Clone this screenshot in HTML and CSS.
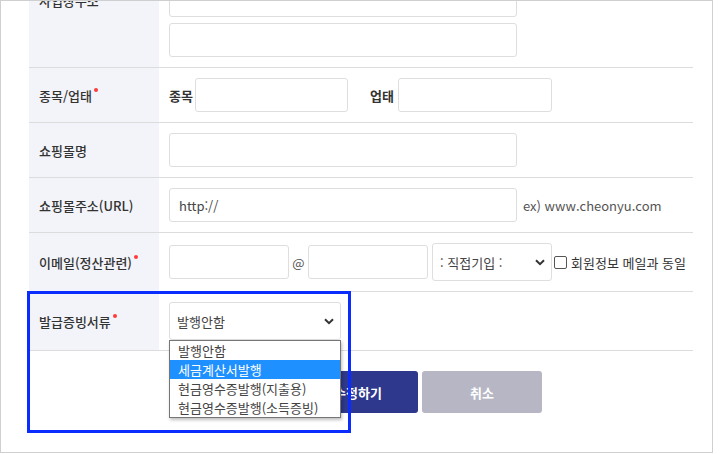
FILE: index.html
```html
<!DOCTYPE html>
<html lang="ko">
<head>
    <meta charset="UTF-8">
    <meta name="viewport" content="width=device-width, initial-scale=1.0">
    <title>입점신청 - 정보수정</title>
    <link rel="stylesheet" href="styles.css">
</head>
<body>
    <div class="frame">
        <div class="form-wrap">
            <div class="form-table">
                <div class="row row-addr">
                    <div class="label">사업장주소</div>
                    <div class="field field-stack">
                        <div class="input w-120"></div>
                        <div class="input w-348"></div>
                        <div class="input w-348"></div>
                    </div>
                </div>
                <div class="row">
                    <div class="label">종목/업태<span class="req"></span></div>
                    <div class="field">
                        <span class="sub-label">종목</span>
                        <div class="input w-153"></div>
                        <span class="sub-label sub-gap">업태</span>
                        <div class="input w-154"></div>
                    </div>
                </div>
                <div class="row">
                    <div class="label">쇼핑몰명</div>
                    <div class="field">
                        <div class="input w-348"></div>
                    </div>
                </div>
                <div class="row">
                    <div class="label">쇼핑몰주소(URL)</div>
                    <div class="field">
                        <div class="input w-348">http://</div>
                        <span class="hint">ex) www.cheonyu.com</span>
                    </div>
                </div>
                <div class="row row-tall">
                    <div class="label">이메일(정산관련)<span class="req"></span></div>
                    <div class="field">
                        <div class="input w-120"></div>
                        <span class="at">@</span>
                        <div class="input w-120"></div>
                        <div class="select w-120">
                            <span>: 직접기입 :</span>
                            <svg class="chev" width="10" height="7" viewBox="0 0 10 7"><path d="M1 1.2 5 5.2 9 1.2" fill="none" stroke="#333" stroke-width="2"/></svg>
                        </div>
                        <span class="check"></span>
                        <span class="check-label">회원정보 메일과 동일</span>
                    </div>
                </div>
                <div class="row row-tall">
                    <div class="label">발급증빙서류<span class="req"></span></div>
                    <div class="field">
                        <div class="select w-172">
                            <span>발행안함</span>
                            <svg class="chev" width="10" height="7" viewBox="0 0 10 7"><path d="M1 1.2 5 5.2 9 1.2" fill="none" stroke="#333" stroke-width="2"/></svg>
                        </div>
                    </div>
                </div>
            </div>

            <div class="btn-area">
                <button class="btn btn-submit">수정하기</button>
                <button class="btn btn-cancel">취소</button>
            </div>

            <ul class="dropdown">
                <li>발행안함</li>
                <li class="active">세금계산서발행</li>
                <li>현금영수증발행(지출용)</li>
                <li>현금영수증발행(소득증빙)</li>
            </ul>
            <div class="highlight"></div>
        </div>
    </div>
</body>
</html>
```

FILE: styles.css
```css
body {
    margin: 0;
    padding: 0;
    font-family: 'Noto Sans CJK KR', 'Noto Sans', sans-serif;
    background: #fff;
    color: #333;
}
.frame {
    width: 711px;
    height: 451px;
    border: 1px solid #cfcfcf;
    overflow: hidden;
    position: relative;
}
.form-wrap {
    position: relative;
    margin-top: -68px;
    padding-left: 28px;
}
.form-table {
    width: 664px;
}
.row {
    display: flex;
    border-bottom: 1px solid #dcdcdc;
}
.label {
    flex: none;
    width: 120px;
    padding-left: 10px;
    background: #f2f4f9;
    font-size: 13px;
    font-weight: 500;
    color: #333;
    display: flex;
    align-items: center;
}
.req {
    display: inline-block;
    width: 4px;
    height: 4px;
    border-radius: 50%;
    background: #ff3a3a;
    margin-left: 2px;
    margin-top: -11px;
}
.field {
    flex: 1;
    min-width: 0;
    padding: 10px;
    display: flex;
    align-items: center;
}
.field-stack {
    flex-direction: column;
    align-items: flex-start;
    gap: 6px;
}
.input {
    flex: none;
    height: 34px;
    box-sizing: border-box;
    border: 1px solid #dedede;
    border-radius: 3px;
    font-size: 13px;
    color: #444;
    padding-left: 9px;
    display: flex;
    align-items: center;
}
.w-120 { width: 120px; }
.w-153 { width: 153px; }
.w-154 { width: 154px; }
.w-172 { width: 172px; }
.w-348 { width: 348px; }
.sub-label {
    font-size: 13px;
    font-weight: 700;
    margin-right: 2px;
}
.sub-gap {
    margin-left: 22px;
    margin-right: 4px;
}
.hint {
    font-size: 13px;
    color: #555;
    margin-left: 6px;
}
.at {
    flex: none;
    font-size: 13px;
    color: #555;
    width: 19px;
    text-align: center;
}
.select {
    flex: none;
    height: 38px;
    box-sizing: border-box;
    border: 1px solid #dedede;
    border-radius: 3px;
    margin-left: 4px;
    font-size: 13px;
    color: #444;
    padding: 0 6px 0 7px;
    display: flex;
    align-items: center;
    justify-content: space-between;
}
.w-172.select {
    margin-left: 0;
}
.check {
    flex: none;
    width: 11px;
    height: 11px;
    border: 1px solid #555;
    border-radius: 2px;
    margin-left: 2px;
    margin-right: 4px;
}
.check-label {
    font-size: 13px;
    color: #333;
    white-space: nowrap;
}
.btn-area {
    display: flex;
    gap: 4px;
    padding-left: 269px;
    margin-top: 20px;
}
.btn {
    width: 120px;
    height: 42px;
    border: none;
    border-radius: 3px;
    color: #fff;
    font-family: inherit;
    font-size: 13px;
    font-weight: 700;
}
.btn-submit {
    background: #2e388c;
}
.btn-cancel {
    background: #b6b6c4;
}
.dropdown {
    position: absolute;
    left: 168px;
    top: 407px;
    width: 170px;
    margin: 0;
    padding: 0;
    list-style: none;
    background: #fff;
    border: 1px solid #767676;
    box-shadow: 1px 2px 3px rgba(0, 0, 0, 0.25);
}
.dropdown li {
    height: 19px;
    line-height: 19px;
    padding-left: 8px;
    font-size: 13px;
    color: #444;
}
.dropdown li.active {
    background: #1e90ff;
    color: #fff;
}
.highlight {
    position: absolute;
    left: 26px;
    top: 358px;
    width: 318px;
    height: 136px;
    border: 3px solid #0a2cff;
}
```
